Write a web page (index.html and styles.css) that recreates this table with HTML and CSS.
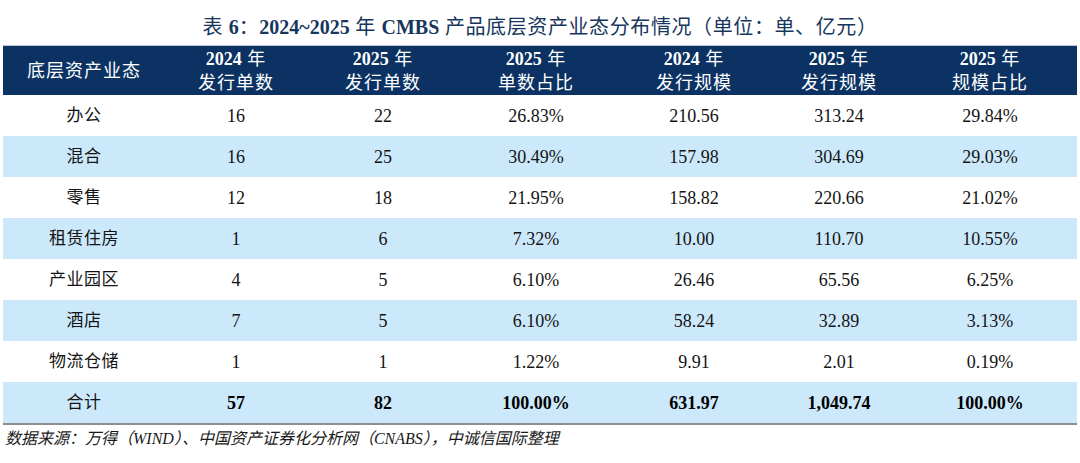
FILE: index.html
```html
<!DOCTYPE html>
<html lang="zh-CN">
<head>
<meta charset="utf-8">
<title>CMBS 产品底层资产业态分布情况</title>
<link rel="stylesheet" href="styles.css">
</head>
<body>
<div class="page">
  <h1 class="title">表 <b>6</b>：<b>2024~2025</b> 年 <b>CMBS</b> 产品底层资产业态分布情况（单位：单、亿元）</h1>
  <table class="data">
    <colgroup>
      <col class="c1"><col class="c2"><col class="c3"><col class="c4"><col class="c5"><col class="c6"><col class="c7">
    </colgroup>
    <thead>
      <tr>
        <th>底层资产业态</th>
        <th><b>2024</b> 年<br>发行单数</th>
        <th><b>2025</b> 年<br>发行单数</th>
        <th><b>2025</b> 年<br>单数占比</th>
        <th><b>2024</b> 年<br>发行规模</th>
        <th><b>2025</b> 年<br>发行规模</th>
        <th><b>2025</b> 年<br>规模占比</th>
      </tr>
    </thead>
    <tbody>
      <tr><td>办公</td><td>16</td><td>22</td><td>26.83%</td><td>210.56</td><td>313.24</td><td>29.84%</td></tr>
      <tr class="alt"><td>混合</td><td>16</td><td>25</td><td>30.49%</td><td>157.98</td><td>304.69</td><td>29.03%</td></tr>
      <tr><td>零售</td><td>12</td><td>18</td><td>21.95%</td><td>158.82</td><td>220.66</td><td>21.02%</td></tr>
      <tr class="alt"><td>租赁住房</td><td>1</td><td>6</td><td>7.32%</td><td>10.00</td><td>110.70</td><td>10.55%</td></tr>
      <tr><td>产业园区</td><td>4</td><td>5</td><td>6.10%</td><td>26.46</td><td>65.56</td><td>6.25%</td></tr>
      <tr class="alt"><td>酒店</td><td>7</td><td>5</td><td>6.10%</td><td>58.24</td><td>32.89</td><td>3.13%</td></tr>
      <tr><td>物流仓储</td><td>1</td><td>1</td><td>1.22%</td><td>9.91</td><td>2.01</td><td>0.19%</td></tr>
      <tr class="alt total"><td>合计</td><td class="num">57</td><td class="num">82</td><td class="num">100.00%</td><td class="num">631.97</td><td class="num">1,049.74</td><td class="num">100.00%</td></tr>
    </tbody>
  </table>
  <p class="source">数据来源：万得（<span class="lat">WIND</span>）、中国资产证券化分析网（<span class="lat">CNABS</span>），中诚信国际整理</p>
</div>
</body>
</html>
```

FILE: styles.css
```css
html, body {
  margin: 0;
  padding: 0;
  background: #ffffff;
}

.page {
  width: 1074px;
  padding: 13px 3px 0 3px;
  font-family: "Liberation Serif", "Noto Sans CJK SC", serif;
  color: #111111;
}

.title {
  margin: 0 0 4px 0;
  height: 28px;
  line-height: 28px;
  font-size: 20px;
  font-weight: 400;
  color: #17365d;
  text-align: center;
  letter-spacing: 0.6px;
}

.title b {
  font-weight: 700;
  letter-spacing: 0;
}

.data {
  width: 1074px;
  border-collapse: collapse;
  table-layout: fixed;
}

.c1 { width: 162px; }
.c2 { width: 142px; }
.c3 { width: 152px; }
.c4 { width: 154px; }
.c5 { width: 162px; }
.c6 { width: 128px; }
.c7 { width: 174px; }

.data th {
  background: #0b3263;
  color: #ffffff;
  font-size: 18px;
  font-weight: 400;
  line-height: 24px;
  height: 49px;
  padding: 0;
  text-align: center;
  vertical-align: middle;
  border-top: 1px solid #b9c3d3;
  letter-spacing: 1px;
}

.data th b {
  font-weight: 700;
  letter-spacing: 0;
}

.data td {
  height: 41px;
  padding: 0;
  font-size: 18px;
  line-height: 20px;
  text-align: center;
  vertical-align: middle;
  color: #141414;
}

.data td:first-child {
  font-size: 17px;
  letter-spacing: 0.5px;
}

.data tr.alt td {
  background: #cce9fb;
}

.data tr.total td {
  border-bottom: 2px solid #8e8e8e;
}

.data td.num {
  font-weight: 700;
  color: #000000;
}

.source {
  margin: 3px 0 0 2px;
  font-size: 16px;
  line-height: 22px;
  font-style: italic;
  color: #1a1a1a;
}

.source .lat {
  font-family: "Liberation Serif", serif;
}
```
